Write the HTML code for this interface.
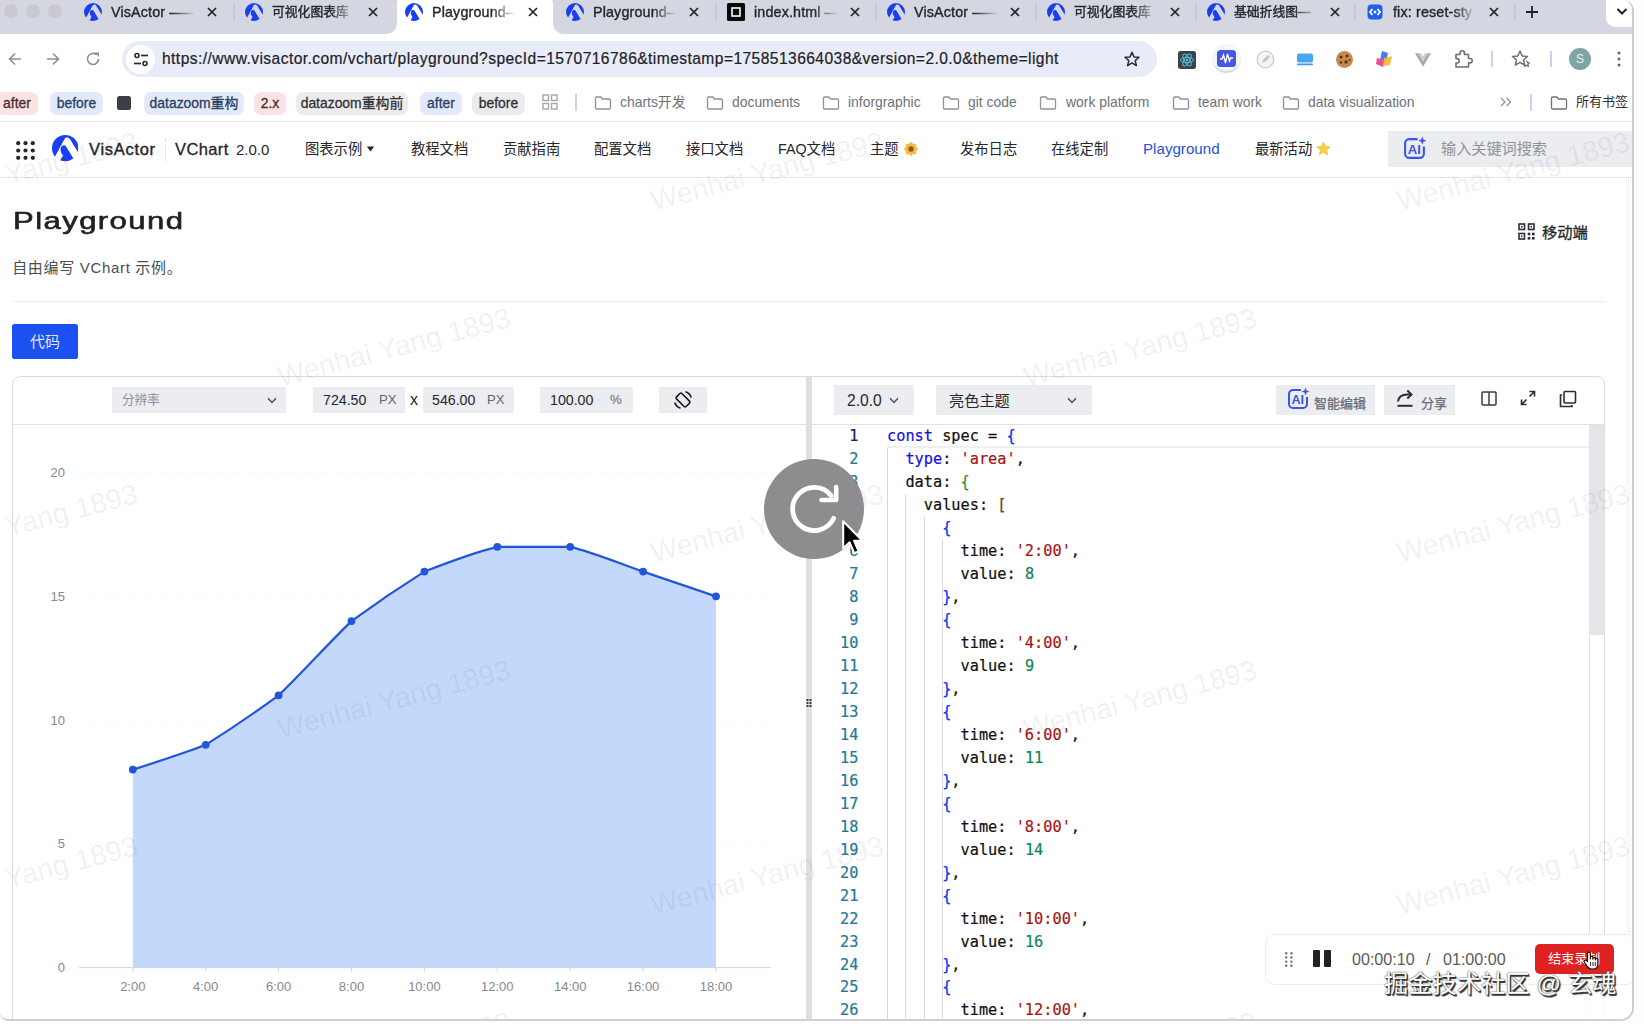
<!DOCTYPE html>
<html lang="zh-CN">
<head>
<meta charset="utf-8">
<title>Playground</title>
<style>
*{box-sizing:border-box;margin:0;padding:0}
html,body{width:1644px;height:1024px;overflow:hidden;background:#fdfdfd}
body{font-family:"Liberation Sans","Noto Sans CJK SC",sans-serif;color:#1f2329;position:relative}
.abs{position:absolute}
#win{position:absolute;left:0;top:0;width:1634px;height:1021px;background:#fff;overflow:hidden;border-top-right-radius:11px;border-right:2px solid #cdcdd1;border-bottom:2px solid #d0d0d2;border-bottom-right-radius:13px;border-bottom-left-radius:8px}
/* ---------- tab bar ---------- */
#tabbar{position:absolute;left:0;top:0;width:1633px;height:34px;background:#d4d7e1}
.tl{position:absolute;top:4px;width:14px;height:14px;border-radius:50%;background:#c8c9d1}
.tab{position:absolute;top:0;height:34px;width:160px;font-size:14px;color:#1f2227;white-space:nowrap;-webkit-text-stroke:.4px #2a2c32}
.tab .ti{position:absolute;left:0;top:3px;width:18px;height:18px}
.tab .tt{position:absolute;left:27px;top:3px;line-height:18px;width:86px;overflow:hidden;-webkit-mask-image:linear-gradient(90deg,#000 60px,transparent 84px);mask-image:linear-gradient(90deg,#000 60px,transparent 84px)}
.tab .tx{position:absolute;left:122px;top:6px;width:12px;height:12px}
.tsep{position:absolute;top:4px;width:1.5px;height:16px;background:#c3c7e2}
#atab{position:absolute;left:397px;top:-6px;width:156px;height:40px;background:#fff;border-radius:10px 10px 0 0}
#atab:before,#atab:after{content:"";position:absolute;bottom:0;width:10px;height:10px;background:radial-gradient(circle at 0 0,transparent 9.5px,#fff 10px)}
#atab:before{left:-10px}
#atab:after{right:-10px;background:radial-gradient(circle at 100% 0,transparent 9.5px,#fff 10px)}
/* ---------- toolbar ---------- */
#tool{position:absolute;left:0;top:34px;width:1633px;height:50px;background:#fff}
#pill{position:absolute;left:122px;top:7px;width:1035px;height:36px;border-radius:18px;background:#e8ecf8}
#url{position:absolute;left:162px;top:16px;font-size:15.6px;line-height:18px;color:#1f2126;white-space:nowrap;letter-spacing:.43px;-webkit-text-stroke:.2px #1f2126}
.ico{position:absolute}
.vsep{position:absolute;width:1.5px;background:#ccd1f2}
/* ---------- bookmarks ---------- */
#bm{position:absolute;left:0;top:84px;width:1633px;height:38px;background:#fff;border-bottom:1px dotted #d4d4d4;font-size:13.9px;color:#3c4043;white-space:nowrap}
.chip{position:absolute;top:7.5px;height:23px;line-height:23px;border-radius:7px;text-align:center;color:#2b3038;-webkit-text-stroke:.3px #2b3038}
.bf{position:absolute;top:12px;width:18px;height:14px}
.bt{position:absolute;top:9px;line-height:18px;color:#6e7278}
/* ---------- site nav ---------- */
#nav{position:absolute;left:0;top:122px;width:1633px;height:56px;background:#fff;border-bottom:1px dotted #cfcfcf;font-size:14.3px;white-space:nowrap}
#nav .ni{position:absolute;top:18px;line-height:18px;color:#23262b}

#panel{position:absolute;left:12px;top:376px;width:1593px;height:660px;border:1px solid #dcdde0;border-radius:8px;background:#fff}
.inp{position:absolute;top:387px;height:26px;background:#ecedf0;font-size:14.2px;line-height:26px;color:#24272c;white-space:nowrap}
.inp span{position:absolute;top:0}
.unit{color:#63666c;font-size:13.2px}
.ln{position:absolute;left:822px;width:36.5px;text-align:right;color:#237893}
#code{position:absolute;left:0;top:0;font-family:"DejaVu Sans Mono","Liberation Mono",monospace;font-size:15.28px;line-height:22.96px;color:#111;white-space:pre;-webkit-text-stroke:.2px}
.cl{position:absolute;left:887px;height:22.96px}
.k{color:#1010e8}.s{color:#a31515}.n{color:#098658}.b1{color:#0431fa}.b2{color:#319331}.b3{color:#7b3814}
.g{position:absolute;width:1px;background:#d8d8d8}

.wm{position:absolute;width:300px;height:40px;margin-left:-150px;margin-top:-20px;line-height:40px;text-align:center;font-size:28.5px;color:rgba(40,40,60,.075);transform:rotate(-14.6deg);white-space:nowrap;pointer-events:none}
#rec{position:absolute;left:1265px;top:934px;width:372px;height:51px;background:#fff;border:1px dotted #d9d9d9;border-radius:11px}
#jj{position:absolute;left:1384px;top:967px;font-size:24.3px;line-height:34px;color:#fff;white-space:nowrap;font-family:"Liberation Sans","Noto Sans CJK SC",sans-serif;text-shadow:1.5px 1.5px 0.8px #333,0.8px 0.8px 0.5px #444,0 0 2px #666,0 0 1px #666}

</style>
</head>
<body>
<div id="win">
<div id="tabbar">
<div class="tl" style="left:4px"></div>
<div class="tl" style="left:26px"></div>
<div class="tl" style="left:48px"></div>
<div id="atab"></div>
<div class="tab" style="left:84px"><svg class="ti" style="" viewBox="0 0 100 100"><circle cx="50" cy="50" r="50" fill="#1a3ff0"/><path d="M57 9 C53 9 50 11 48 14 L4 96 L-5 106 L110 106 L110 84 L68 15 C65 11 61 9 57 9 Z" fill="#d4d7e1"/><path d="M31 96 L42 78 Q29 63 33 51 A11.5 11.5 0 0 1 55 46 L81 89 Q57 106 31 96 Z" fill="#1a3ff0"/></svg><span class="tt" style="font-size:14.3px;letter-spacing:.15px">VisActor ——</span><svg class="tx" viewBox="0 0 12 12"><path d="M2 2 L10 10 M10 2 L2 10" stroke="#1f2228" stroke-width="1.7" fill="none"/></svg></div>
<div class="tab" style="left:245px"><svg class="ti" style="" viewBox="0 0 100 100"><circle cx="50" cy="50" r="50" fill="#1a3ff0"/><path d="M57 9 C53 9 50 11 48 14 L4 96 L-5 106 L110 106 L110 84 L68 15 C65 11 61 9 57 9 Z" fill="#d4d7e1"/><path d="M31 96 L42 78 Q29 63 33 51 A11.5 11.5 0 0 1 55 46 L81 89 Q57 106 31 96 Z" fill="#1a3ff0"/></svg><span class="tt" style="font-size:12.8px">可视化图表库</span><svg class="tx" viewBox="0 0 12 12"><path d="M2 2 L10 10 M10 2 L2 10" stroke="#1f2228" stroke-width="1.7" fill="none"/></svg></div>
<div class="tab" style="left:405px"><svg class="ti" style="" viewBox="0 0 100 100"><circle cx="50" cy="50" r="50" fill="#1a3ff0"/><path d="M57 9 C53 9 50 11 48 14 L4 96 L-5 106 L110 106 L110 84 L68 15 C65 11 61 9 57 9 Z" fill="#fff"/><path d="M31 96 L42 78 Q29 63 33 51 A11.5 11.5 0 0 1 55 46 L81 89 Q57 106 31 96 Z" fill="#1a3ff0"/></svg><span class="tt" style="font-size:14.3px;letter-spacing:.15px">Playground—</span><svg class="tx" viewBox="0 0 12 12"><path d="M2 2 L10 10 M10 2 L2 10" stroke="#1f2228" stroke-width="1.7" fill="none"/></svg></div>
<div class="tab" style="left:566px"><svg class="ti" style="" viewBox="0 0 100 100"><circle cx="50" cy="50" r="50" fill="#1a3ff0"/><path d="M57 9 C53 9 50 11 48 14 L4 96 L-5 106 L110 106 L110 84 L68 15 C65 11 61 9 57 9 Z" fill="#d4d7e1"/><path d="M31 96 L42 78 Q29 63 33 51 A11.5 11.5 0 0 1 55 46 L81 89 Q57 106 31 96 Z" fill="#1a3ff0"/></svg><span class="tt" style="font-size:14.3px;letter-spacing:.15px">Playground—</span><svg class="tx" viewBox="0 0 12 12"><path d="M2 2 L10 10 M10 2 L2 10" stroke="#1f2228" stroke-width="1.7" fill="none"/></svg></div>
<div class="tab" style="left:727px"><svg class="ti" viewBox="0 0 18 18"><rect x="0" y="0" width="18" height="18" rx="1.5" fill="#0b0b0b"/><rect x="5" y="5" width="8" height="8" fill="none" stroke="#fff" stroke-width="1.6"/></svg><span class="tt" style="font-size:14.3px;letter-spacing:.15px">index.html —</span><svg class="tx" viewBox="0 0 12 12"><path d="M2 2 L10 10 M10 2 L2 10" stroke="#1f2228" stroke-width="1.7" fill="none"/></svg></div>
<div class="tab" style="left:887px"><svg class="ti" style="" viewBox="0 0 100 100"><circle cx="50" cy="50" r="50" fill="#1a3ff0"/><path d="M57 9 C53 9 50 11 48 14 L4 96 L-5 106 L110 106 L110 84 L68 15 C65 11 61 9 57 9 Z" fill="#d4d7e1"/><path d="M31 96 L42 78 Q29 63 33 51 A11.5 11.5 0 0 1 55 46 L81 89 Q57 106 31 96 Z" fill="#1a3ff0"/></svg><span class="tt" style="font-size:14.3px;letter-spacing:.15px">VisActor ——</span><svg class="tx" viewBox="0 0 12 12"><path d="M2 2 L10 10 M10 2 L2 10" stroke="#1f2228" stroke-width="1.7" fill="none"/></svg></div>
<div class="tab" style="left:1047px"><svg class="ti" style="" viewBox="0 0 100 100"><circle cx="50" cy="50" r="50" fill="#1a3ff0"/><path d="M57 9 C53 9 50 11 48 14 L4 96 L-5 106 L110 106 L110 84 L68 15 C65 11 61 9 57 9 Z" fill="#d4d7e1"/><path d="M31 96 L42 78 Q29 63 33 51 A11.5 11.5 0 0 1 55 46 L81 89 Q57 106 31 96 Z" fill="#1a3ff0"/></svg><span class="tt" style="font-size:12.8px">可视化图表库</span><svg class="tx" viewBox="0 0 12 12"><path d="M2 2 L10 10 M10 2 L2 10" stroke="#1f2228" stroke-width="1.7" fill="none"/></svg></div>
<div class="tab" style="left:1207px"><svg class="ti" style="" viewBox="0 0 100 100"><circle cx="50" cy="50" r="50" fill="#1a3ff0"/><path d="M57 9 C53 9 50 11 48 14 L4 96 L-5 106 L110 106 L110 84 L68 15 C65 11 61 9 57 9 Z" fill="#d4d7e1"/><path d="M31 96 L42 78 Q29 63 33 51 A11.5 11.5 0 0 1 55 46 L81 89 Q57 106 31 96 Z" fill="#1a3ff0"/></svg><span class="tt" style="font-size:12.8px">基础折线图—</span><svg class="tx" viewBox="0 0 12 12"><path d="M2 2 L10 10 M10 2 L2 10" stroke="#1f2228" stroke-width="1.7" fill="none"/></svg></div>
<div class="tab" style="left:1366px"><svg class="ti" viewBox="0 0 18 18"><rect x="1.5" y="1.5" width="15" height="15" rx="4" fill="#1d5fe6"/><path d="M6.5 6 L4 9 L6.5 12 M11.5 6 L14 9 L11.5 12" stroke="#fff" stroke-width="1.8" fill="none"/><rect x="7.7" y="7.7" width="2.6" height="2.6" fill="#fff"/></svg><span class="tt" style="font-size:14.3px;letter-spacing:.15px">fix: reset-sty</span><svg class="tx" viewBox="0 0 12 12"><path d="M2 2 L10 10 M10 2 L2 10" stroke="#1f2228" stroke-width="1.7" fill="none"/></svg></div>
<div class="tsep" style="left:233px"></div>
<div class="tsep" style="left:715px"></div>
<div class="tsep" style="left:875px"></div>
<div class="tsep" style="left:1035px"></div>
<div class="tsep" style="left:1195px"></div>
<div class="tsep" style="left:1354px"></div>
<div class="tsep" style="left:1514px"></div>
<svg class="abs" style="left:1525px;top:5px;width:14px;height:14px" viewBox="0 0 14 14"><path d="M7 1 V13 M1 7 H13" stroke="#1f2228" stroke-width="1.8" fill="none"/></svg>
<div class="abs" style="left:1606px;top:-8px;width:27px;height:35px;background:#fff;border-radius:9px 0 0 9px"></div>
<svg class="abs" style="left:1616px;top:7px;width:12px;height:9px" viewBox="0 0 12 9"><path d="M1.5 2 L6 6.5 L10.5 2" stroke="#1f2228" stroke-width="2" fill="none"/></svg>
</div>
<div id="tool">
<svg class="ico" style="left:7px;top:17px;width:16px;height:16px" viewBox="0 0 16 16"><path d="M14 8 H2.5 M8 2.5 L2.5 8 L8 13.5" stroke="#8a8d93" stroke-width="1.6" fill="none"/></svg>
<svg class="ico" style="left:45px;top:17px;width:16px;height:16px" viewBox="0 0 16 16"><path d="M2 8 H13.5 M8 2.5 L13.5 8 L8 13.5" stroke="#8a8d93" stroke-width="1.6" fill="none"/></svg>
<svg class="ico" style="left:85px;top:17px;width:16px;height:16px" viewBox="0 0 16 16"><path d="M13.5 8 A5.5 5.5 0 1 1 11.5 3.7" stroke="#8a8d93" stroke-width="1.6" fill="none"/><path d="M9.5 1.5 H14 V6 Z" fill="#8a8d93"/></svg>
<div id="pill"></div>
<div class="abs" style="left:126px;top:11px;width:29px;height:29px;border-radius:50%;background:#fff"></div>
<svg class="ico" style="left:133px;top:18px;width:16px;height:15px" viewBox="0 0 16 15"><circle cx="4" cy="3.5" r="2" fill="none" stroke="#26292e" stroke-width="1.6"/><path d="M8 3.5 H15" stroke="#26292e" stroke-width="1.7"/><circle cx="12" cy="11.5" r="2" fill="none" stroke="#26292e" stroke-width="1.6"/><path d="M1 11.5 H8" stroke="#26292e" stroke-width="1.7"/></svg>
<div id="url">https://www.visactor.com/vchart/playground?specId=1570716786&amp;timestamp=1758513664038&amp;version=2.0.0&amp;theme=light</div>
<svg class="ico" style="left:1124px;top:17px;width:16px;height:16px" viewBox="0 0 16 16"><path d="M8 1.2 L10 5.9 L15 6.3 L11.2 9.6 L12.4 14.6 L8 11.9 L3.6 14.6 L4.8 9.6 L1 6.3 L6 5.9 Z" stroke="#2a2d33" stroke-width="1.5" fill="none" stroke-linejoin="round"/></svg>
<svg class="ico" style="left:1177.5px;top:16.5px;width:18px;height:18px" viewBox="0 0 19 19"><rect width="19" height="19" rx="2.5" fill="#3b4249"/><ellipse cx="9.5" cy="9.5" rx="7" ry="2.8" fill="none" stroke="#55c3dc" stroke-width="1"/><ellipse cx="9.5" cy="9.5" rx="7" ry="2.8" fill="none" stroke="#55c3dc" stroke-width="1" transform="rotate(60 9.5 9.5)"/><ellipse cx="9.5" cy="9.5" rx="7" ry="2.8" fill="none" stroke="#55c3dc" stroke-width="1" transform="rotate(120 9.5 9.5)"/><circle cx="9.5" cy="9.5" r="1.4" fill="#55c3dc"/></svg>
<div class="abs" style="left:1212px;top:10px;width:29px;height:29px;border-radius:50%;background:#f5f6fa;border-bottom:2px solid #d5d8e8"></div>
<svg class="ico" style="left:1217px;top:16px;width:19px;height:17px" viewBox="0 0 19 17"><rect width="19" height="17" rx="3.5" fill="#4457e6"/><path d="M3 9 H5 L6.5 5 L8.5 13 L10.5 4 L12.5 11 L13.5 8 H16" stroke="#fff" stroke-width="1.3" fill="none"/></svg>
<svg class="ico" style="left:1256px;top:16px;width:19px;height:19px" viewBox="0 0 19 19"><circle cx="9.5" cy="9.5" r="8.3" fill="#f4f4f6" stroke="#c9cad0" stroke-width="1.2"/><path d="M6 13 L7 10 L12 5 L14 7 L9 12 Z" fill="#c3c4ca"/></svg>
<svg class="ico" style="left:1296px;top:19px;width:18px;height:13px" viewBox="0 0 18 13"><rect x="1" y="0.5" width="16" height="9" rx="2" fill="#49a7f2"/><rect x="1" y="10.6" width="16" height="1.6" rx=".8" fill="#3f95ea"/></svg>
<svg class="ico" style="left:1335px;top:16px;width:19px;height:19px" viewBox="0 0 19 19"><circle cx="9.5" cy="9.5" r="8.5" fill="#c58a4c"/><circle cx="6" cy="7" r="1.6" fill="#5b3316"/><circle cx="12" cy="6" r="1.4" fill="#5b3316"/><circle cx="11" cy="12" r="1.7" fill="#5b3316"/><circle cx="6" cy="12.5" r="1.2" fill="#5b3316"/><circle cx="14.5" cy="10" r="1" fill="#5b3316"/></svg>
<svg class="ico" style="left:1374px;top:15px;width:20px;height:21px" viewBox="0 0 20 21"><path d="M8 2 L14 4 L12 13 L6 11 Z" fill="#3f7df0"/><path d="M3 9 L11 11 L9 18 L2 15 Z" fill="#f04f8f"/><path d="M10 9 L18 7 L16 16 L9 17 Z" fill="#f5b731" opacity=".9"/></svg>
<svg class="ico" style="left:1415px;top:19px;width:16px;height:14px" viewBox="0 0 20 17"><path d="M0 0 H4 L10 10 L16 0 H20 L10 17 Z" fill="#a6a8ad"/><path d="M4 0 H7.5 L10 4.2 L12.5 0 H16 L10 10 Z" fill="#cbccd0"/></svg>
<svg class="ico" style="left:1453px;top:14px;width:20px;height:21px" viewBox="0 0 20 21"><path d="M3 6.5 H7 V5 a2.2 2.2 0 0 1 4.4 0 V6.5 H15.5 V10.5 H17 a2.2 2.2 0 0 1 0 4.4 H15.5 V19 H3 V15 H4 a2.2 2.2 0 0 0 0 -4.4 H3 Z" fill="none" stroke="#6c6f76" stroke-width="1.6" stroke-linejoin="round"/></svg>
<div class="vsep" style="left:1491px;top:17px;height:16px"></div>
<svg class="ico" style="left:1511px;top:15px;width:20px;height:20px" viewBox="0 0 20 20"><path d="M9 2 L11.2 7 L16.5 7.5 L12.5 11 L13.7 16.2 L9 13.4 L4.3 16.2 L5.5 11 L1.5 7.5 L6.8 7 Z" stroke="#6c6f76" stroke-width="1.5" fill="none" stroke-linejoin="round"/><path d="M15.5 11.5 L16.4 13.6 L18.6 13.8 L16.9 15.3 L17.4 17.5 L15.5 16.3 L13.6 17.5 L14.1 15.3" stroke="#6c6f76" stroke-width="1.2" fill="#fff" stroke-linejoin="round"/></svg>
<div class="vsep" style="left:1550px;top:17px;height:16px"></div>
<div class="abs" style="left:1569px;top:14px;width:22px;height:22px;border-radius:50%;background:#7fa5a3;color:#eaf3f3;font-size:12px;line-height:22px;text-align:center">S</div>
<svg class="ico" style="left:1617px;top:17px;width:4px;height:16px" viewBox="0 0 4 16"><circle cx="2" cy="2" r="1.5" fill="#63666c"/><circle cx="2" cy="8" r="1.5" fill="#63666c"/><circle cx="2" cy="14" r="1.5" fill="#63666c"/></svg>
</div>
<div id="bm">
<div class="chip" style="left:-4px;width:42px;background:#fbe3e3;color:#4a2b2b;-webkit-text-stroke-color:#4a2b2b">after</div>
<div class="chip" style="left:50px;width:53px;background:#e1e9fa;color:#2b3f63;-webkit-text-stroke-color:#2b3f63">before</div>
<div class="chip" style="left:144px;width:100px;background:#e1e9fa;color:#2b3f63;-webkit-text-stroke-color:#2b3f63">datazoom重构</div>
<div class="chip" style="left:254px;width:32px;background:#fbe3e3;color:#4a2b2b;-webkit-text-stroke-color:#4a2b2b">2.x</div>
<div class="chip" style="left:296px;width:112px;background:#ececee;color:#303236;-webkit-text-stroke-color:#303236">datazoom重构前</div>
<div class="chip" style="left:420px;width:42px;background:#e1e9fa;color:#2b3f63;-webkit-text-stroke-color:#2b3f63">after</div>
<div class="chip" style="left:472px;width:53px;background:#ececee;color:#303236;-webkit-text-stroke-color:#303236">before</div>
<div class="abs" style="left:117px;top:12px;width:14px;height:14px;border-radius:2.5px;background:#3c3f46"></div>
<svg class="abs" style="left:542px;top:10px;width:16px;height:16px" viewBox="0 0 16 16"><g fill="none" stroke="#a4a6ab" stroke-width="1.4"><rect x="1" y="1" width="5.5" height="5.5"/><rect x="9.5" y="1" width="5.5" height="5.5"/><rect x="1" y="9.5" width="5.5" height="5.5"/><rect x="9.5" y="9.5" width="5.5" height="5.5"/></g></svg>
<div class="vsep" style="left:575px;top:10px;height:17px"></div>
<svg class="bf" style="left:594px" viewBox="0 0 17 14"><path d="M1 2.2 a1.2 1.2 0 0 1 1.2 -1.2 H6.3 L8 3 H14.8 a1.2 1.2 0 0 1 1.2 1.2 V11.8 a1.2 1.2 0 0 1 -1.2 1.2 H2.2 a1.2 1.2 0 0 1 -1.2 -1.2 Z" fill="none" stroke="#8f9196" stroke-width="1.3"/></svg>
<span class="bt" style="left:620px">charts开发</span>
<svg class="bf" style="left:706px" viewBox="0 0 17 14"><path d="M1 2.2 a1.2 1.2 0 0 1 1.2 -1.2 H6.3 L8 3 H14.8 a1.2 1.2 0 0 1 1.2 1.2 V11.8 a1.2 1.2 0 0 1 -1.2 1.2 H2.2 a1.2 1.2 0 0 1 -1.2 -1.2 Z" fill="none" stroke="#8f9196" stroke-width="1.3"/></svg>
<span class="bt" style="left:732px">documents</span>
<svg class="bf" style="left:822px" viewBox="0 0 17 14"><path d="M1 2.2 a1.2 1.2 0 0 1 1.2 -1.2 H6.3 L8 3 H14.8 a1.2 1.2 0 0 1 1.2 1.2 V11.8 a1.2 1.2 0 0 1 -1.2 1.2 H2.2 a1.2 1.2 0 0 1 -1.2 -1.2 Z" fill="none" stroke="#8f9196" stroke-width="1.3"/></svg>
<span class="bt" style="left:848px">inforgraphic</span>
<svg class="bf" style="left:942px" viewBox="0 0 17 14"><path d="M1 2.2 a1.2 1.2 0 0 1 1.2 -1.2 H6.3 L8 3 H14.8 a1.2 1.2 0 0 1 1.2 1.2 V11.8 a1.2 1.2 0 0 1 -1.2 1.2 H2.2 a1.2 1.2 0 0 1 -1.2 -1.2 Z" fill="none" stroke="#8f9196" stroke-width="1.3"/></svg>
<span class="bt" style="left:968px">git code</span>
<svg class="bf" style="left:1039px" viewBox="0 0 17 14"><path d="M1 2.2 a1.2 1.2 0 0 1 1.2 -1.2 H6.3 L8 3 H14.8 a1.2 1.2 0 0 1 1.2 1.2 V11.8 a1.2 1.2 0 0 1 -1.2 1.2 H2.2 a1.2 1.2 0 0 1 -1.2 -1.2 Z" fill="none" stroke="#8f9196" stroke-width="1.3"/></svg>
<span class="bt" style="left:1066px">work platform</span>
<svg class="bf" style="left:1172px" viewBox="0 0 17 14"><path d="M1 2.2 a1.2 1.2 0 0 1 1.2 -1.2 H6.3 L8 3 H14.8 a1.2 1.2 0 0 1 1.2 1.2 V11.8 a1.2 1.2 0 0 1 -1.2 1.2 H2.2 a1.2 1.2 0 0 1 -1.2 -1.2 Z" fill="none" stroke="#8f9196" stroke-width="1.3"/></svg>
<span class="bt" style="left:1198px">team work</span>
<svg class="bf" style="left:1282px" viewBox="0 0 17 14"><path d="M1 2.2 a1.2 1.2 0 0 1 1.2 -1.2 H6.3 L8 3 H14.8 a1.2 1.2 0 0 1 1.2 1.2 V11.8 a1.2 1.2 0 0 1 -1.2 1.2 H2.2 a1.2 1.2 0 0 1 -1.2 -1.2 Z" fill="none" stroke="#8f9196" stroke-width="1.3"/></svg>
<span class="bt" style="left:1308px">data visualization</span>
<svg class="abs" style="left:1500px;top:13px;width:12px;height:10px" viewBox="0 0 12 10"><path d="M1 1 L5 5 L1 9 M6.5 1 L10.5 5 L6.5 9" stroke="#8f9196" stroke-width="1.3" fill="none"/></svg>
<div class="vsep" style="left:1530px;top:10px;height:17px"></div>
<svg class="bf" style="left:1550px" viewBox="0 0 17 14"><path d="M1 2.2 a1.2 1.2 0 0 1 1.2 -1.2 H6.3 L8 3 H14.8 a1.2 1.2 0 0 1 1.2 1.2 V11.8 a1.2 1.2 0 0 1 -1.2 1.2 H2.2 a1.2 1.2 0 0 1 -1.2 -1.2 Z" fill="none" stroke="#6f7277" stroke-width="1.3"/></svg>
<span class="bt" style="left:1576px;color:#2b2e33;font-size:13px">所有书签</span>
</div>
<div id="nav">
<svg class="abs" style="left:16px;top:19px;width:19px;height:19px" viewBox="0 0 19 19" fill="#26282d"><circle cx="2.2" cy="2.2" r="2.1"/><circle cx="2.2" cy="9.5" r="2.1"/><circle cx="2.2" cy="16.8" r="2.1"/><circle cx="9.5" cy="2.2" r="2.1"/><circle cx="9.5" cy="9.5" r="2.1"/><circle cx="9.5" cy="16.8" r="2.1"/><circle cx="16.8" cy="2.2" r="2.1"/><circle cx="16.8" cy="9.5" r="2.1"/><circle cx="16.8" cy="16.8" r="2.1"/></svg>
<svg class="abs" style="left:51.7px;top:13.3px;width:26.4px;height:26.4px" viewBox="0 0 100 100"><circle cx="50" cy="50" r="50" fill="#1a3ff0"/><path d="M57 9 C53 9 50 11 48 14 L4 96 L-5 106 L110 106 L110 84 L68 15 C65 11 61 9 57 9 Z" fill="#fff"/><path d="M31 96 L42 78 Q29 63 33 51 A11.5 11.5 0 0 1 55 46 L81 89 Q57 106 31 96 Z" fill="#1a3ff0"/></svg>
<span class="ni" id="n_vis" style="left:89px;font-size:16.5px;letter-spacing:.7px;-webkit-text-stroke:.4px #23262b">VisActor</span>
<div class="abs" style="left:165px;top:17px;height:22px;border-left:1px dotted #d4d4d4"></div>
<span class="ni" id="n_vc" style="left:175px;font-size:16.5px;letter-spacing:.4px;-webkit-text-stroke:.3px #23262b">VChart</span>
<span class="ni" id="n_ver" style="left:236px;font-size:15px;top:19px">2.0.0</span>
<span class="ni" id="n0" style="left:305px;">图表示例</span>
<span class="ni" id="n1" style="left:411px;">教程文档</span>
<span class="ni" id="n2" style="left:503px;">贡献指南</span>
<span class="ni" id="n3" style="left:594px;">配置文档</span>
<span class="ni" id="n4" style="left:686px;">接口文档</span>
<span class="ni" id="n5" style="left:778px;">FAQ文档</span>
<span class="ni" id="n6" style="left:870px;">主题</span>
<span class="ni" id="n7" style="left:960px;">发布日志</span>
<span class="ni" id="n8" style="left:1051px;">在线定制</span>
<span class="ni" id="n9" style="left:1143px;color:#2452d8;font-size:15.15px">Playground</span>
<span class="ni" id="n10" style="left:1255px;">最新活动</span>
<svg class="abs" style="left:366px;top:24px;width:9px;height:6px" viewBox="0 0 8 6"><path d="M0.3 0.5 H7.7 L4 5.5 Z" fill="#26282d"/></svg>
<svg class="abs" style="left:903.5px;top:19.5px;width:14px;height:14px" viewBox="0 0 16 16"><circle cx="8" cy="8" r="6.8" fill="#f7cf52"/><g fill="#f4b93a"><ellipse cx="8" cy="2.6" rx="1.7" ry="2.6" transform="rotate(0 8 8)"/><ellipse cx="8" cy="2.6" rx="1.7" ry="2.6" transform="rotate(45 8 8)"/><ellipse cx="8" cy="2.6" rx="1.7" ry="2.6" transform="rotate(90 8 8)"/><ellipse cx="8" cy="2.6" rx="1.7" ry="2.6" transform="rotate(135 8 8)"/><ellipse cx="8" cy="2.6" rx="1.7" ry="2.6" transform="rotate(180 8 8)"/><ellipse cx="8" cy="2.6" rx="1.7" ry="2.6" transform="rotate(225 8 8)"/><ellipse cx="8" cy="2.6" rx="1.7" ry="2.6" transform="rotate(270 8 8)"/><ellipse cx="8" cy="2.6" rx="1.7" ry="2.6" transform="rotate(315 8 8)"/></g><circle cx="8" cy="8" r="3.1" fill="#8a5a1f"/></svg>
<svg class="abs" style="left:1316px;top:19px;width:15px;height:15px" viewBox="0 0 16 16"><path d="M8 1.2 L10 5.9 L15 6.3 L11.2 9.6 L12.4 14.6 L8 11.9 L3.6 14.6 L4.8 9.6 L1 6.3 L6 5.9 Z" fill="#f7d04a" stroke="#f0b92c" stroke-width=".8" stroke-linejoin="round"/></svg>
<div class="abs" style="left:1388px;top:8.5px;width:245px;height:36px;background:#ecedf1"></div>
<svg class="abs" style="left:1402px;top:14px;width:25px;height:25px" viewBox="0 0 24 24"><path d="M15 3 H7 a4 4 0 0 0 -4 4 V17 a4 4 0 0 0 4 4 H17 a4 4 0 0 0 4 -4 V10" fill="none" stroke="#3a55e8" stroke-width="2"/><path d="M19.5 0.5 L20.6 3.4 L23.5 4.5 L20.6 5.6 L19.5 8.5 L18.4 5.6 L15.5 4.5 L18.4 3.4 Z" fill="#3a55e8"/><text x="5.6" y="17.3" font-family="Liberation Sans,sans-serif" font-weight="bold" font-size="12.5" fill="#3a55e8">AI</text></svg>
<span class="ni" id="n_ph" style="left:1441px;color:#8f9298;font-size:15.15px">输入关键词搜索</span>
</div>
<div class="abs" style="left:1628px;top:178px;height:757px;border-left:1px dotted #e2e2e2"></div>
<div class="abs" id="h1" style="left:12.6px;top:203.5px;font-size:24.3px;line-height:34px;font-weight:normal;-webkit-text-stroke:.6px #1d2025;letter-spacing:1.1px;color:#1d2025;transform-origin:0 50%;transform:scaleX(1.28)">Playground</div>
<div class="abs" id="sub" style="left:12.2px;top:258px;font-size:15px;line-height:20px;letter-spacing:.68px;color:#4a4d53">自由编写 VChart 示例。</div>
<div class="abs" style="left:12px;top:301px;width:1593px;border-top:1px dotted #dcdcdc"></div>
<div class="abs" style="left:12px;top:324px;width:66px;height:35px;background:#1d50f0;border-radius:2.5px;color:#dfe8ff;font-size:15px;line-height:35px;text-align:center">代码</div>
<svg class="abs" style="left:1518px;top:223px;width:17px;height:17px" viewBox="0 0 17 17"><g fill="none" stroke="#2a2d33" stroke-width="1.6"><rect x="1" y="1" width="5.5" height="5.5"/><rect x="10.5" y="1" width="5.5" height="5.5"/><rect x="1" y="10.5" width="5.5" height="5.5"/></g><g fill="#2a2d33"><rect x="3" y="3" width="1.5" height="1.5"/><rect x="12.5" y="3" width="1.5" height="1.5"/><rect x="3" y="12.5" width="1.5" height="1.5"/><rect x="9.7" y="9.7" width="2.6" height="2.6"/><rect x="14" y="9.7" width="2.6" height="2.6"/><rect x="9.7" y="14" width="2.6" height="2.6"/><rect x="14" y="14" width="2.6" height="2.6"/></g></svg>
<div class="abs" id="mob" style="left:1542px;top:223px;font-size:15.3px;line-height:20px;color:#24272c;-webkit-text-stroke:.3px">移动端</div>
<div id="panel"></div>
<div class="abs" style="left:13px;top:424px;width:1591px;height:1px;background:#dfe0e3"></div>
<div class="inp" style="left:112px;width:174px"><span style="left:10px;color:#8d9096;font-size:12.6px">分辨率</span></div>
<svg class="abs" style="left:267px;top:397px;width:10px;height:7px" viewBox="0 0 10 7"><path d="M1 1.2 L5 5.4 L9 1.2" stroke="#4b4e54" stroke-width="1.4" fill="none"/></svg>
<div class="inp" style="left:313px;width:92px"><span style="left:10px">724.50</span><span class="unit" style="left:66px">PX</span></div>
<div class="abs" style="left:410px;top:391px;font-size:16px;line-height:18px;color:#1f2227">x</div>
<div class="inp" style="left:423px;width:91px"><span style="left:9px">546.00</span><span class="unit" style="left:64px">PX</span></div>
<div class="inp" style="left:540px;width:93px"><span style="left:10px">100.00</span><span class="unit" style="left:70px">%</span></div>
<div class="inp" style="left:659px;width:48px"></div>
<svg class="abs" style="left:673px;top:390px;width:20px;height:20px" viewBox="0 0 20 20"><g fill="none" stroke="#17191d" stroke-width="1.6"><rect x="6.2" y="3.2" width="7.6" height="13.6" rx="1.4" transform="rotate(-45 10 10)"/><path d="M12.5 1.8 A8.5 8.5 0 0 1 18.2 7.5"/><path d="M7.5 18.2 A8.5 8.5 0 0 1 1.8 12.5"/></g></svg>
<div class="abs" style="left:806px;top:377px;width:6px;height:660px;background:#dedfe2"></div>
<svg class="abs" style="left:806px;top:698px;width:6px;height:10px" viewBox="0 0 6 10" fill="#3a3c40"><rect x="0.5" y="1" width="2" height="2"/><rect x="3.5" y="1" width="2" height="2"/><rect x="0.5" y="4" width="2" height="2"/><rect x="3.5" y="4" width="2" height="2"/><rect x="0.5" y="7" width="2" height="2"/><rect x="3.5" y="7" width="2" height="2"/></svg>
<div class="inp" style="left:834px;width:80px;top:385px;height:30px;line-height:31px;font-size:15.6px"><span style="left:13px">2.0.0</span></div>
<svg class="abs" style="left:889px;top:397px;width:10px;height:7px" viewBox="0 0 10 7"><path d="M1 1.2 L5 5.4 L9 1.2" stroke="#4b4e54" stroke-width="1.4" fill="none"/></svg>
<div class="inp" style="left:936px;width:156px;top:385px;height:30px;line-height:31px;font-size:15.2px"><span style="left:13px">亮色主题</span></div>
<svg class="abs" style="left:1067px;top:397px;width:10px;height:7px" viewBox="0 0 10 7"><path d="M1 1.2 L5 5.4 L9 1.2" stroke="#4b4e54" stroke-width="1.4" fill="none"/></svg>
<div class="inp" style="left:1276px;width:99px;top:385px;height:30px"></div>
<svg class="abs" style="left:1286px;top:387px;width:24px;height:24px" viewBox="0 0 24 24"><path d="M15 3 H7 a4 4 0 0 0 -4 4 V17 a4 4 0 0 0 4 4 H17 a4 4 0 0 0 4 -4 V10" fill="none" stroke="#3a55e8" stroke-width="2"/><path d="M19.5 0.5 L20.6 3.4 L23.5 4.5 L20.6 5.6 L19.5 8.5 L18.4 5.6 L15.5 4.5 L18.4 3.4 Z" fill="#3a55e8"/><text x="5.6" y="17.3" font-family="Liberation Sans,sans-serif" font-weight="bold" font-size="12.5" fill="#3a55e8">AI</text></svg>
<div class="abs" id="znbj" style="left:1314px;top:395.5px;font-size:13px;line-height:16px;color:#666b73;-webkit-text-stroke:.25px;white-space:nowrap">智能编辑</div>
<div class="inp" style="left:1384px;width:71px;top:385px;height:30px"></div>
<svg class="abs" style="left:1395px;top:389px;width:20px;height:19px" viewBox="0 0 20 19"><g fill="none" stroke="#2a2d33" stroke-width="2"><path d="M2.5 16.8 H17.5"/><path d="M3 12.5 C3.5 8 7 5.5 12.5 5.5 H16"/><path d="M12.3 1.5 L16.5 5.5 L12.3 9.5"/></g></svg>
<div class="abs" id="fx" style="left:1421px;top:395.5px;font-size:13px;line-height:16px;color:#666b73;-webkit-text-stroke:.25px;white-space:nowrap">分享</div>
<svg class="abs" style="left:1481px;top:391px;width:16px;height:15px" viewBox="0 0 16 15"><g fill="none" stroke="#3a3d43" stroke-width="1.5"><rect x="1" y="1" width="14" height="13" rx="1"/><path d="M8 1 V14"/></g></svg>
<svg class="abs" style="left:1520px;top:390px;width:16px;height:16px" viewBox="0 0 16 16"><g fill="none" stroke="#2a2d33" stroke-width="1.6"><path d="M9.5 1.5 H14.5 V6.5 M14.5 1.5 L9.5 6.5"/><path d="M6.5 14.5 H1.5 V9.5 M1.5 14.5 L6.5 9.5"/></g></svg>
<svg class="abs" style="left:1559px;top:390px;width:18px;height:18px" viewBox="0 0 18 18"><g fill="none" stroke="#2a2d33" stroke-width="1.6"><rect x="5" y="1.5" width="11.5" height="11.5" rx="1"/><path d="M3 5 H1.5 V16.5 H13 V15"/></g></svg>
<svg class="abs" style="left:0;top:425px;width:806px;height:599px" viewBox="0 425 806 599" font-family="Liberation Sans, sans-serif">
<line x1="79" x2="771" y1="967.6" y2="967.6" stroke="#d4d6da" stroke-width="1"/>
<path d="M132.80 769.60 C157.10 761.97 181.40 754.34 205.70 744.85 C230.00 729.59 254.30 713.09 278.60 695.35 C302.90 671.84 327.20 644.61 351.50 621.10 C375.80 603.36 400.10 586.86 424.40 571.60 C448.70 562.11 473.00 552.62 497.30 546.85 C521.60 546.85 545.90 546.85 570.20 546.85 C594.50 552.62 618.80 563.35 643.10 571.60 C667.40 579.85 691.70 588.10 716.00 596.35 L716.00 967.6 L132.80 967.6 Z" fill="#c4d8fb"/>
<line x1="84" x2="770" y1="843.85" y2="843.85" stroke="#7d8aa8" stroke-opacity=".2" stroke-width="1" stroke-dasharray="1 4.5"/>
<line x1="84" x2="770" y1="720.10" y2="720.10" stroke="#7d8aa8" stroke-opacity=".2" stroke-width="1" stroke-dasharray="1 4.5"/>
<line x1="84" x2="770" y1="596.35" y2="596.35" stroke="#7d8aa8" stroke-opacity=".2" stroke-width="1" stroke-dasharray="1 4.5"/>
<line x1="84" x2="770" y1="472.60" y2="472.60" stroke="#7d8aa8" stroke-opacity=".2" stroke-width="1" stroke-dasharray="1 4.5"/>
<path d="M132.80 769.60 C157.10 761.97 181.40 754.34 205.70 744.85 C230.00 729.59 254.30 713.09 278.60 695.35 C302.90 671.84 327.20 644.61 351.50 621.10 C375.80 603.36 400.10 586.86 424.40 571.60 C448.70 562.11 473.00 552.62 497.30 546.85 C521.60 546.85 545.90 546.85 570.20 546.85 C594.50 552.62 618.80 563.35 643.10 571.60 C667.40 579.85 691.70 588.10 716.00 596.35" fill="none" stroke="#2156d9" stroke-width="2.2" stroke-linejoin="round"/>
<circle cx="132.80" cy="769.60" r="3.9" fill="#2156d9"/>
<circle cx="205.70" cy="744.85" r="3.9" fill="#2156d9"/>
<circle cx="278.60" cy="695.35" r="3.9" fill="#2156d9"/>
<circle cx="351.50" cy="621.10" r="3.9" fill="#2156d9"/>
<circle cx="424.40" cy="571.60" r="3.9" fill="#2156d9"/>
<circle cx="497.30" cy="546.85" r="3.9" fill="#2156d9"/>
<circle cx="570.20" cy="546.85" r="3.9" fill="#2156d9"/>
<circle cx="643.10" cy="571.60" r="3.9" fill="#2156d9"/>
<circle cx="716.00" cy="596.35" r="3.9" fill="#2156d9"/>
<text x="65" y="972.10" text-anchor="end" font-size="13" fill="#858990">0</text>
<text x="65" y="848.35" text-anchor="end" font-size="13" fill="#858990">5</text>
<text x="65" y="724.60" text-anchor="end" font-size="13" fill="#858990">10</text>
<text x="65" y="600.85" text-anchor="end" font-size="13" fill="#858990">15</text>
<text x="65" y="477.10" text-anchor="end" font-size="13" fill="#858990">20</text>
<line x1="132.80" x2="132.80" y1="967.6" y2="971.6" stroke="#d4d6da" stroke-width="1"/>
<text x="132.80" y="990.8" text-anchor="middle" font-size="13" fill="#858990">2:00</text>
<line x1="205.70" x2="205.70" y1="967.6" y2="971.6" stroke="#d4d6da" stroke-width="1"/>
<text x="205.70" y="990.8" text-anchor="middle" font-size="13" fill="#858990">4:00</text>
<line x1="278.60" x2="278.60" y1="967.6" y2="971.6" stroke="#d4d6da" stroke-width="1"/>
<text x="278.60" y="990.8" text-anchor="middle" font-size="13" fill="#858990">6:00</text>
<line x1="351.50" x2="351.50" y1="967.6" y2="971.6" stroke="#d4d6da" stroke-width="1"/>
<text x="351.50" y="990.8" text-anchor="middle" font-size="13" fill="#858990">8:00</text>
<line x1="424.40" x2="424.40" y1="967.6" y2="971.6" stroke="#d4d6da" stroke-width="1"/>
<text x="424.40" y="990.8" text-anchor="middle" font-size="13" fill="#858990">10:00</text>
<line x1="497.30" x2="497.30" y1="967.6" y2="971.6" stroke="#d4d6da" stroke-width="1"/>
<text x="497.30" y="990.8" text-anchor="middle" font-size="13" fill="#858990">12:00</text>
<line x1="570.20" x2="570.20" y1="967.6" y2="971.6" stroke="#d4d6da" stroke-width="1"/>
<text x="570.20" y="990.8" text-anchor="middle" font-size="13" fill="#858990">14:00</text>
<line x1="643.10" x2="643.10" y1="967.6" y2="971.6" stroke="#d4d6da" stroke-width="1"/>
<text x="643.10" y="990.8" text-anchor="middle" font-size="13" fill="#858990">16:00</text>
<line x1="716.00" x2="716.00" y1="967.6" y2="971.6" stroke="#d4d6da" stroke-width="1"/>
<text x="716.00" y="990.8" text-anchor="middle" font-size="13" fill="#858990">18:00</text>
</svg>
<div id="code">
<div class="ln" style="top:425.42px;color:#0b216f">1</div><div class="cl" style="top:425.42px"><span class="k">const</span> spec = <span class="b1">{</span></div>
<div class="ln" style="top:448.38px">2</div><div class="cl" style="top:448.38px">  <span class="k">type</span>: <span class="s">'area'</span>,</div>
<div class="ln" style="top:471.34px">3</div><div class="cl" style="top:471.34px">  data: <span class="b2">{</span></div>
<div class="ln" style="top:494.30px">4</div><div class="cl" style="top:494.30px">    values: <span class="b3">[</span></div>
<div class="ln" style="top:517.26px">5</div><div class="cl" style="top:517.26px">      <span class="b1">{</span></div>
<div class="ln" style="top:540.22px">6</div><div class="cl" style="top:540.22px">        time: <span class="s">'2:00'</span>,</div>
<div class="ln" style="top:563.18px">7</div><div class="cl" style="top:563.18px">        value: <span class="n">8</span></div>
<div class="ln" style="top:586.14px">8</div><div class="cl" style="top:586.14px">      <span class="b1">}</span>,</div>
<div class="ln" style="top:609.10px">9</div><div class="cl" style="top:609.10px">      <span class="b1">{</span></div>
<div class="ln" style="top:632.06px">10</div><div class="cl" style="top:632.06px">        time: <span class="s">'4:00'</span>,</div>
<div class="ln" style="top:655.02px">11</div><div class="cl" style="top:655.02px">        value: <span class="n">9</span></div>
<div class="ln" style="top:677.98px">12</div><div class="cl" style="top:677.98px">      <span class="b1">}</span>,</div>
<div class="ln" style="top:700.94px">13</div><div class="cl" style="top:700.94px">      <span class="b1">{</span></div>
<div class="ln" style="top:723.90px">14</div><div class="cl" style="top:723.90px">        time: <span class="s">'6:00'</span>,</div>
<div class="ln" style="top:746.86px">15</div><div class="cl" style="top:746.86px">        value: <span class="n">11</span></div>
<div class="ln" style="top:769.82px">16</div><div class="cl" style="top:769.82px">      <span class="b1">}</span>,</div>
<div class="ln" style="top:792.78px">17</div><div class="cl" style="top:792.78px">      <span class="b1">{</span></div>
<div class="ln" style="top:815.74px">18</div><div class="cl" style="top:815.74px">        time: <span class="s">'8:00'</span>,</div>
<div class="ln" style="top:838.70px">19</div><div class="cl" style="top:838.70px">        value: <span class="n">14</span></div>
<div class="ln" style="top:861.66px">20</div><div class="cl" style="top:861.66px">      <span class="b1">}</span>,</div>
<div class="ln" style="top:884.62px">21</div><div class="cl" style="top:884.62px">      <span class="b1">{</span></div>
<div class="ln" style="top:907.58px">22</div><div class="cl" style="top:907.58px">        time: <span class="s">'10:00'</span>,</div>
<div class="ln" style="top:930.54px">23</div><div class="cl" style="top:930.54px">        value: <span class="n">16</span></div>
<div class="ln" style="top:953.50px">24</div><div class="cl" style="top:953.50px">      <span class="b1">}</span>,</div>
<div class="ln" style="top:976.46px">25</div><div class="cl" style="top:976.46px">      <span class="b1">{</span></div>
<div class="ln" style="top:999.42px">26</div><div class="cl" style="top:999.42px">        time: <span class="s">'12:00'</span>,</div>
<div class="g" style="left:887px;top:448.38px;height:575.62px"></div>
<div class="g" style="left:905.4px;top:494.30px;height:529.70px"></div>
<div class="g" style="left:923.8px;top:517.26px;height:506.74px"></div>
<div class="g" style="left:942.2px;top:540.22px;height:483.78px"></div>
<div class="abs" style="left:887px;top:446px;width:702px;height:2px;background:#efefef"></div>
</div>
<div class="abs" style="left:1589px;top:425px;width:1px;height:600px;background:#e3e3e6"></div>
<div class="abs" style="left:1590px;top:425px;width:14px;height:210px;background:#e4e5e8"></div>
<div class="abs" style="left:0;top:122px;width:1632px;height:900px;overflow:hidden;pointer-events:none">
<div class="wm" style="left:21px;top:49px">Wenhai Yang 1893</div>
<div class="wm" style="left:394px;top:225px">Wenhai Yang 1893</div>
<div class="wm" style="left:767px;top:49px">Wenhai Yang 1893</div>
<div class="wm" style="left:1140px;top:225px">Wenhai Yang 1893</div>
<div class="wm" style="left:1513px;top:49px">Wenhai Yang 1893</div>
<div class="wm" style="left:21px;top:401px">Wenhai Yang 1893</div>
<div class="wm" style="left:394px;top:577px">Wenhai Yang 1893</div>
<div class="wm" style="left:767px;top:401px">Wenhai Yang 1893</div>
<div class="wm" style="left:1140px;top:577px">Wenhai Yang 1893</div>
<div class="wm" style="left:1513px;top:401px">Wenhai Yang 1893</div>
<div class="wm" style="left:21px;top:753px">Wenhai Yang 1893</div>
<div class="wm" style="left:394px;top:929px">Wenhai Yang 1893</div>
<div class="wm" style="left:767px;top:753px">Wenhai Yang 1893</div>
<div class="wm" style="left:1140px;top:929px">Wenhai Yang 1893</div>
<div class="wm" style="left:1513px;top:753px">Wenhai Yang 1893</div>
</div>
<svg class="abs" style="left:763px;top:458px;width:102px;height:102px" viewBox="0 0 102 102"><circle cx="51" cy="51" r="50" fill="#8b8b8e" fill-opacity=".985"/><path d="M68.3 37.7 A21.6 21.6 0 1 0 70.7 60.3" fill="none" stroke="#fff" stroke-width="4.8" stroke-linecap="round"/><path d="M73.2 29 V42 H58.5" fill="none" stroke="#fff" stroke-width="4.6" stroke-linecap="round" stroke-linejoin="round"/></svg>
<div class="abs" style="left:1580px;top:985px;width:52px;height:34px;background:rgba(255,255,255,.72)"></div>
<div id="rec"></div>
<svg class="abs" style="left:1284.5px;top:951.5px;width:8px;height:15px" viewBox="0 0 8 15" fill="#707070"><circle cx="1.2" cy="1.2" r="1.2"/><circle cx="1.2" cy="5.4" r="1.2"/><circle cx="1.2" cy="9.6" r="1.2"/><circle cx="1.2" cy="13.8" r="1.2"/><circle cx="6.4" cy="1.2" r="1.2"/><circle cx="6.4" cy="5.4" r="1.2"/><circle cx="6.4" cy="9.6" r="1.2"/><circle cx="6.4" cy="13.8" r="1.2"/></svg>
<div class="abs" style="left:1313px;top:950px;width:6.6px;height:17px;background:#222;border-radius:1px"></div>
<div class="abs" style="left:1324.4px;top:950px;width:6.6px;height:17px;background:#222;border-radius:1px"></div>
<div class="abs" id="t1" style="left:1352px;top:949px;font-size:16.1px;line-height:20px;color:#5a5a5a;white-space:nowrap">00:00:10</div>
<div class="abs" id="t2" style="left:1426px;top:949px;font-size:16.1px;line-height:20px;color:#5a5a5a;white-space:nowrap">/</div>
<div class="abs" id="t3" style="left:1443px;top:949px;font-size:16.1px;line-height:20px;color:#5a5a5a;white-space:nowrap">01:00:00</div>
<div class="abs" id="stop" style="left:1534.5px;top:943.5px;width:79.5px;height:30.5px;border-radius:5px;background:#de2121;color:#fff;font-size:13px;line-height:30px;text-align:center;white-space:nowrap">结束录制</div>
<div id="jj">掘金技术社区 @ 玄魂</div>
<svg class="abs" style="left:1583px;top:951px;width:16px;height:19px" viewBox="0 0 16 19"><path d="M4.5 10.5 V2.6 a1.4 1.4 0 0 1 2.8 0 V8 V6.6 a1.3 1.3 0 0 1 2.6 0 V8.2 V7.4 a1.3 1.3 0 0 1 2.5 0 V9 V8.5 a1.2 1.2 0 0 1 2.4 0 V13 C14.8 16.5 13 18 10 18 H8.5 C6.5 18 5.3 17 4.2 15.3 L1.3 11 a1.3 1.3 0 0 1 2.1 -1.5 Z" fill="#fff" stroke="#111" stroke-width="1.2" stroke-linejoin="round"/><path d="M7.6 11 V15 M10 11 V15 M12.3 11 V15" stroke="#111" stroke-width=".9"/></svg>
<svg class="abs" style="left:840px;top:518px;width:26px;height:40px" viewBox="-2 -2 16.25 25"><path d="M0 0 L0 17 L4 13.2 L6.9 20 L9.7 18.8 L6.8 12.2 L12 12.2 Z" fill="#000" stroke="#fff" stroke-width="1.3" stroke-linejoin="round"/></svg>
</div>
</body>
</html>
